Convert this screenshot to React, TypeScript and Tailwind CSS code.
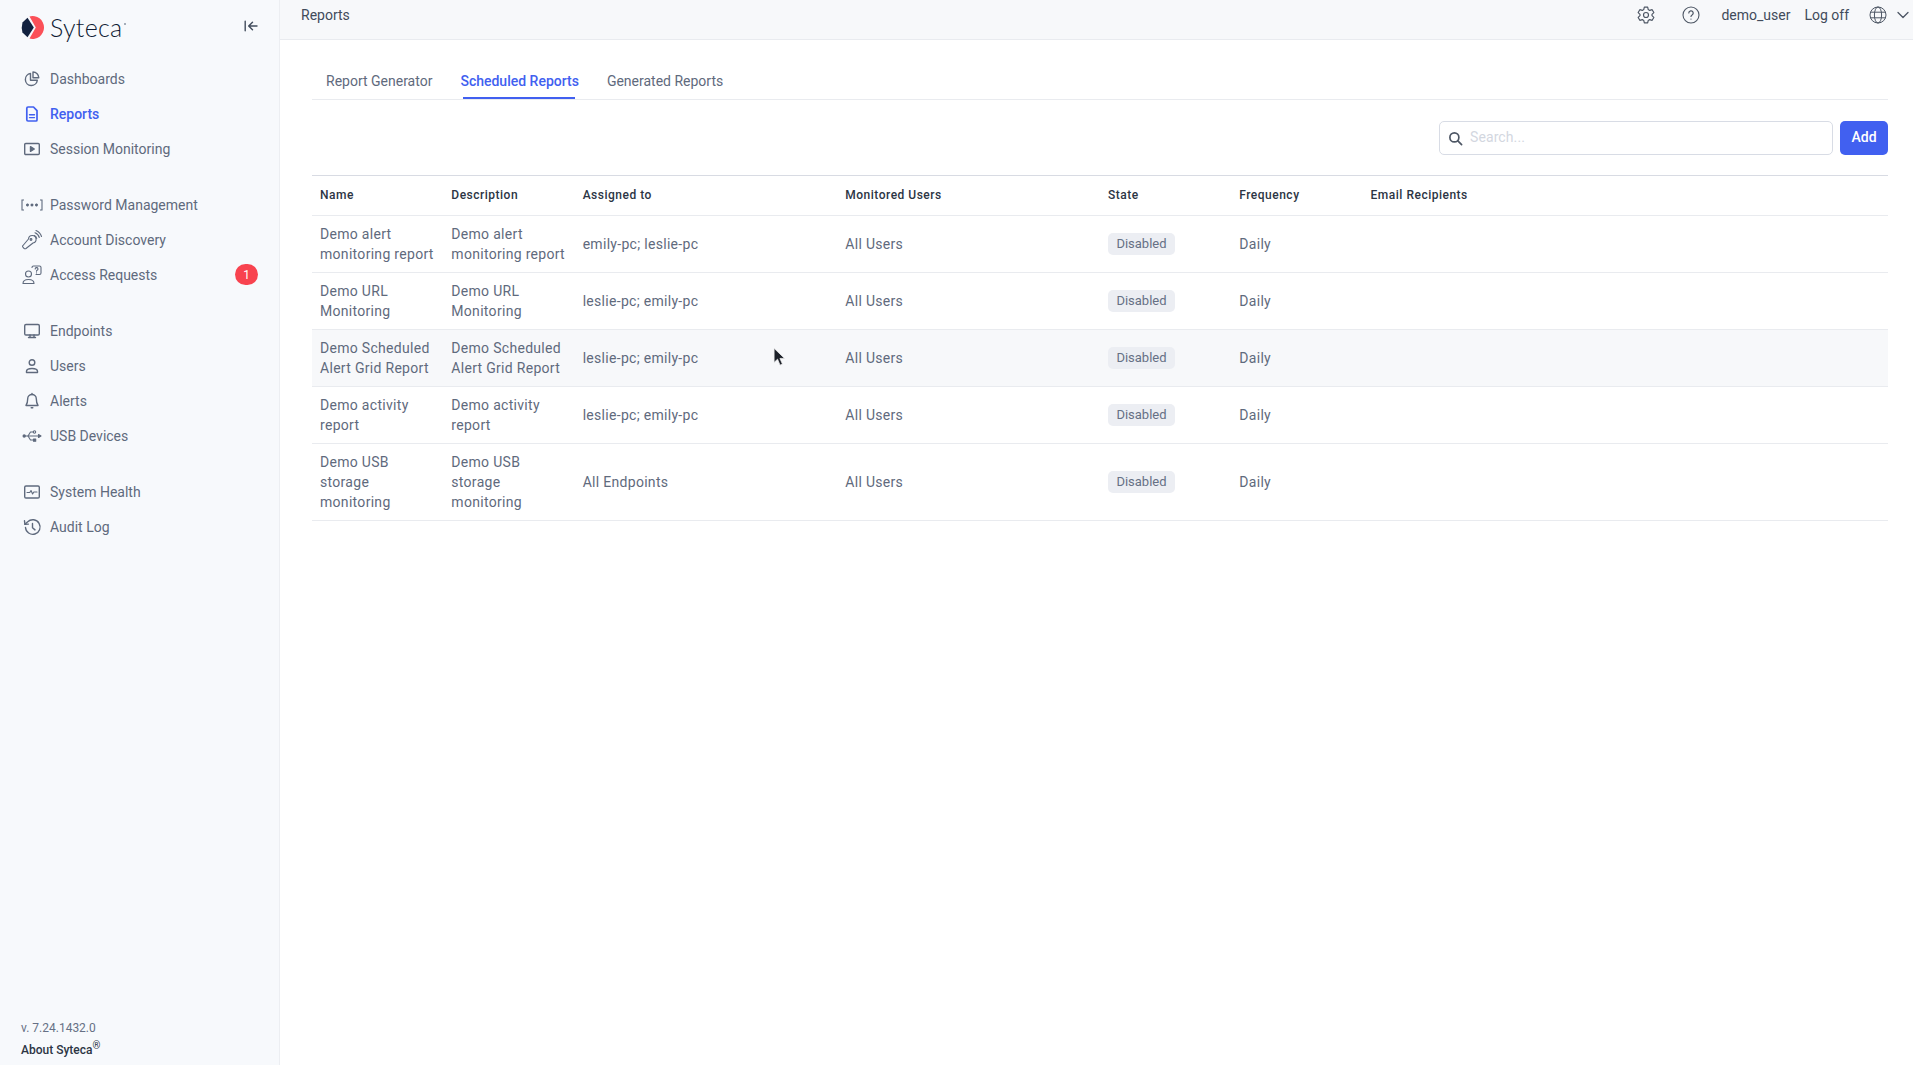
import React from 'react';

const Svg = ({ children, className }: { children: React.ReactNode; className?: string }) => (
  <svg viewBox="0 0 20 20" fill="none" stroke="currentColor" strokeWidth="1.4" strokeLinecap="round" strokeLinejoin="round" className={className}>
    {children}
  </svg>
);

const iconClass = 'w-5 h-5';

const DashboardsIcon = () => (
  <Svg className={iconClass}>
    <path d="M8.5 4.500a6 6 0 1 0 6.800 6.800H8.500z" />
    <path d="M11 3a5.800 5.800 0 0 1 5.800 5.800H11z" />
  </Svg>
);
const ReportsIcon = () => (
  <Svg className={iconClass}>
    <path d="M6 3h5.500l3.500 3.700v9.300a1 1 0 0 1-1 1H6a1.200 1.200 0 0 1-1.200-1.200V4.200A1.200 1.200 0 0 1 6 3z" strokeWidth="1.700" />
    <path d="M7.500 10.800h5M7.500 13.600h5" strokeWidth="1.400" />
  </Svg>
);
const SessionIcon = () => (
  <Svg className={iconClass}>
    <rect x="2.700" y="4.500" width="14.600" height="11" rx="1.100" />
    <path d="M8.500 7.700l3.800 2.300-3.800 2.300z" fill="currentColor" />
  </Svg>
);
const PasswordIcon = () => (
  <svg viewBox="0 0 22 12" className="w-[22px] h-3" fill="none" stroke="currentColor" strokeWidth="1.100">
    <path d="M3 1H1v10h2M19 1h2v10h-2" />
    <path d="M6.500 4.500v3M5.200 5.300l2.600 1.400M7.800 5.300L5.200 6.700M11 4.500v3M9.700 5.300l2.600 1.400M12.300 5.300L9.700 6.700M15.500 4.500v3M14.200 5.300l2.600 1.400M16.800 5.300l-2.600 1.400" />
  </svg>
);
const DiscoveryIcon = () => (
  <svg viewBox="0 0 22 22" className="w-[22px] h-[22px]" fill="none" stroke="currentColor" strokeWidth="1.100" strokeLinecap="round" strokeLinejoin="round">
    <path d="M2 16.500l5.500-6.500a3.800 3.800 0 1 1 4.500 4L5.300 19.300a1.600 1.600 0 0 1-2.300 0l-.8-.8a1.200 1.200 0 0 1-.2-2z" />
    <circle cx="10" cy="10.500" r=".9" />
    <path d="M13.300 6.500a4 4 0 0 1 2.400 3M14 3.800a7 7 0 0 1 4.300 4.700M15 1.500a9.500 9.500 0 0 1 5.500 6" />
  </svg>
);
const AccessIcon = () => (
  <svg viewBox="0 0 22 22" className="w-[22px] h-[22px]" fill="none" stroke="currentColor" strokeWidth="1.100" strokeLinecap="round" strokeLinejoin="round">
    <circle cx="7.500" cy="10" r="3" />
    <path d="M2 19.500c0-2.600 2-4 5.500-4s5.500 1.400 5.500 4z" />
    <path d="M11 3.500a1.500 1.500 0 0 1 1.500-1.500h6A1.500 1.500 0 0 1 20 3.500V9a1.500 1.500 0 0 1-1.500 1.500H15" />
    <path d="M14.200 5a1.400 1.400 0 1 1 1.900 1.300c-.4.2-.6.4-.6.9M15.500 8.800v.1" />
  </svg>
);
const EndpointsIcon = () => (
  <Svg className={iconClass}>
    <rect x="2.700" y="3.500" width="14.600" height="10.500" rx="1.300" />
    <path d="M8 14v2M12 14v2M6.500 16.500h7" />
  </Svg>
);
const UsersIcon = () => (
  <Svg className={iconClass}>
    <circle cx="10" cy="6.500" r="2.800" />
    <path d="M4.500 16.500v-1.200c0-1.800 2.200-2.800 5.500-2.800s5.500 1 5.500 2.800v1.200z" />
  </Svg>
);
const AlertsIcon = () => (
  <Svg className={iconClass}>
    <path d="M10 3.500a4.300 4.300 0 0 0-4.300 4.300c0 3.500-.7 5.200-1.700 6.700h12c-1-1.500-1.700-3.200-1.700-6.700A4.300 4.300 0 0 0 10 3.500z" />
    <path d="M9.200 16.800h1.600M10 2.500v1" />
  </Svg>
);
const UsbIcon = () => (
  <svg viewBox="0 0 20 14" className="w-5 h-[14px]" fill="none" stroke="currentColor" strokeWidth="1.100" strokeLinecap="round" strokeLinejoin="round">
    <circle cx="2.200" cy="7" r="1.700" fill="currentColor" stroke="none" />
    <path d="M2.500 7h15" />
    <path d="M6 7l2.500-4h3M6 7l2.500 4h3" />
    <circle cx="12.500" cy="3" r="1.200" />
    <rect x="11.500" y="10" width="2.200" height="2.200" fill="currentColor" />
    <path d="M16.500 5.500L19 7l-2.500 1.500z" fill="currentColor" />
  </svg>
);
const HealthIcon = () => (
  <Svg className={iconClass}>
    <rect x="2.700" y="4" width="14.600" height="12" rx="1.300" />
    <path d="M5 10.500h2.800l1.200-2 1.600 3.500 1.200-2h3.200" strokeWidth="1.100" />
  </Svg>
);
const AuditIcon = () => (
  <Svg className={iconClass}>
    <path d="M3.500 10.500a7.300 7.300 0 1 0 2.200-5.700L3 7.300" />
    <path d="M2.500 3.800l.4 3.600 3.500-.3" />
    <path d="M10.500 6.500v4.200l2.500 2.200" />
  </Svg>
);

const CollapseIcon = () => (
  <svg viewBox="0 0 14 12" className="w-[14px] h-3" fill="none" stroke="currentColor" strokeWidth="1.400" strokeLinecap="round" strokeLinejoin="round">
    <path d="M1.200 1.200v9.600M13 6H5M8.500 2.200L4.700 6l3.800 3.800" />
  </svg>
);

const Logo = () => (
  <div className="flex items-center">
    <svg viewBox="0 0 23 23" className="w-[23px] h-[23px]">
      <path d="M8.500 .4A11.500 11.500 0 1 1 8.500 22.600L14.800 11.500z" fill="#fb5058" />
      <path d="M6.500 1.800L12.800 11.500 6.500 21.200 1.500 16.500Q0 11.500 1.500 6.500z" fill="#12213f" />
    </svg>
    <span className="ml-[6px] font-['Lato',sans-serif] text-[25px] leading-none font-light tracking-[0.3px] text-[#0e1a33]">Syteca</span>
    <span className="ml-[1px] mb-[8px] w-[2px] h-[2px] bg-[#8a93a3] rounded-full" />
  </div>
);

const navGroups = [
  [
    { label: 'Dashboards', icon: <DashboardsIcon /> },
    { label: 'Reports', icon: <ReportsIcon />, active: true },
    { label: 'Session Monitoring', icon: <SessionIcon /> },
  ],
  [
    { label: 'Password Management', icon: <PasswordIcon /> },
    { label: 'Account Discovery', icon: <DiscoveryIcon /> },
    { label: 'Access Requests', icon: <AccessIcon />, badge: 1 },
  ],
  [
    { label: 'Endpoints', icon: <EndpointsIcon /> },
    { label: 'Users', icon: <UsersIcon /> },
    { label: 'Alerts', icon: <AlertsIcon /> },
    { label: 'USB Devices', icon: <UsbIcon /> },
  ],
  [
    { label: 'System Health', icon: <HealthIcon /> },
    { label: 'Audit Log', icon: <AuditIcon /> },
  ],
];

const reports = [
  { name: 'Demo alert monitoring report', assigned: 'emily-pc; leslie-pc' },
  { name: 'Demo URL Monitoring', assigned: 'leslie-pc; emily-pc' },
  { name: 'Demo Scheduled Alert Grid Report', assigned: 'leslie-pc; emily-pc', hovered: true },
  { name: 'Demo activity report', assigned: 'leslie-pc; emily-pc' },
  { name: 'Demo USB storage monitoring', assigned: 'All Endpoints' },
];

const columns = ['Name', 'Description', 'Assigned to', 'Monitored Users', 'State', 'Frequency', 'Email Recipients'];

const Sidebar = () => (
  <aside className="w-[280px] shrink-0 h-full flex flex-col bg-[#f7f9fc] border-r border-[#eceef2]">
    <div className="h-[52px] pl-[21px] pr-[22px] pt-[15px] flex items-start justify-between">
      <Logo />
      <div className="text-[#424c5c] mt-[5px] mr-[-1px]">
        <CollapseIcon />
      </div>
    </div>
    <nav className="mt-[9px] flex flex-col gap-[21px]">
      {navGroups.map((group, i) => (
        <div key={i} className="flex flex-col">
          {group.map((item) => (
            <div
              key={item.label}
              className={`h-[35px] flex items-center pr-[21px] ${item.active ? 'text-[#4160f0] font-medium' : 'text-[#5f6a7d]'}`}
            >
              <div className="w-[50px] pl-[20px] pr-[6px] flex justify-center shrink-0">{item.icon}</div>
              <span className="text-[14px] leading-5 flex-1">{item.label}</span>
              {item.badge && (
                <span className="w-[23px] h-[21px] rounded-full bg-[#f8434f] text-white text-[12px] flex items-center justify-center">
                  {item.badge}
                </span>
              )}
            </div>
          ))}
        </div>
      ))}
    </nav>
    <div className="mt-auto pl-[21px] pb-[6px] text-[12px] leading-[18px]">
      <div className="text-[#667085] mb-[4px]">v. 7.24.1432.0</div>
      <div className="text-[#2c3544] font-medium">
        About Syteca<sup className="text-[10px] font-normal leading-none">®</sup>
      </div>
    </div>
  </aside>
);

const Header = () => (
  <header className="h-10 shrink-0 bg-[#f7f8fa] border-b border-[#e9ebef] flex pl-[21px] pr-[4px] pt-[5px] text-[14px] leading-5 text-[#414b5a]">
    <span>Reports</span>
    <div className="ml-auto flex h-5">
      <svg viewBox="0 0 24 24" className="w-5 h-5 text-[#4d5664]" fill="none" stroke="currentColor" strokeWidth="1.400" strokeLinejoin="round">
        <path d="M10 2.500h4l.7 3 1.700 1 3-.9 2 3.500-2.200 2.100v1.600l2.200 2.100-2 3.500-3-.9-1.700 1-.7 3h-4l-.7-3-1.700-1-3 .9-2-3.500 2.200-2.100v-1.600L2.600 9.100l2-3.500 3 .9 1.700-1z" />
        <circle cx="12" cy="12" r="3" />
      </svg>
      <svg viewBox="0 0 18 18" className="ml-[26px] w-[18px] h-[18px] mt-[1px] text-[#4d5664]" fill="none" stroke="currentColor" strokeWidth="1.100" strokeLinecap="round">
        <circle cx="9" cy="9" r="8" />
        <path d="M6.800 7a2.200 2.200 0 1 1 3.300 1.900c-.7.4-1.100.8-1.100 1.600M9 13v.1" strokeWidth="1.200" />
      </svg>
      <span className="ml-[21px]">demo_user</span>
      <span className="ml-[14px]">Log off</span>
      <svg viewBox="0 0 18 18" className="ml-[20px] w-[18px] h-[18px] mt-[1px] text-[#4d5664]" fill="none" stroke="currentColor" strokeWidth="1">
        <circle cx="9" cy="9" r="8" />
        <ellipse cx="9" cy="9" rx="3.600" ry="8" />
        <path d="M1.500 6.200h15M1.500 11.800h15" />
      </svg>
      <svg viewBox="0 0 12 8" className="ml-[10px] w-3 h-2 mt-[6px] text-[#4d5664]" fill="none" stroke="currentColor" strokeWidth="1.300" strokeLinecap="round" strokeLinejoin="round">
        <path d="M1 1.500l5 5 5-5" />
      </svg>
    </div>
  </header>
);

const Tabs = () => (
  <div className="flex h-[60px] pt-[31px] border-b border-[#e9ebef] text-[14px] leading-5 text-[#5f6a7d]">
    <div className="ml-[14px]">Report Generator</div>
    <div className="relative ml-[28px] text-[#4160f0] font-medium">
      Scheduled Reports
      <span className="absolute left-[3px] right-[4px] top-[26px] h-[2px] bg-[#4160f0]" />
    </div>
    <div className="ml-[28px]">Generated Reports</div>
  </div>
);

const Toolbar = () => (
  <div className="h-[75px] flex justify-end items-start pt-[21px] gap-[7px]">
    <div className="w-[394px] h-[34px] flex items-center rounded-[5px] border border-[#d8dce5] bg-white pl-[8px]">
      <svg viewBox="0 0 16 16" className="w-[15px] h-[15px] text-[#4d5664]" fill="none" stroke="currentColor" strokeWidth="1.800" strokeLinecap="round">
        <circle cx="6.800" cy="6.800" r="4.800" />
        <path d="M10.500 10.500l4 4" />
      </svg>
      <span className="ml-[7px] pb-[2px] text-[14px] tracking-[0.1px] text-[#d3d7df]">Search...</span>
    </div>
    <button className="w-12 h-[34px] pb-[2px] rounded-[5px] bg-[#4160f0] text-white text-[14px] font-medium">Add</button>
  </div>
);

const ReportsTable = () => (
  <table className="w-full table-fixed border-collapse text-[14px] leading-5 tracking-[0.3px] text-[#5f6a7d]">
    <colgroup>
      <col className="w-[8.333%]" />
      <col className="w-[8.333%]" />
      <col className="w-[16.667%]" />
      <col className="w-[16.667%]" />
      <col className="w-[8.333%]" />
      <col className="w-[8.333%]" />
      <col />
    </colgroup>
    <thead>
      <tr className="h-[40px] border-t border-t-[#d8dbe3] border-b border-b-[#e9ebef]">
        {columns.map((c) => (
          <th key={c} className="px-2 pb-[2px] text-left text-[12px] font-medium tracking-[0.5px] text-[#2c3544]">
            {c}
          </th>
        ))}
      </tr>
    </thead>
    <tbody>
      {reports.map((r) => (
        <tr key={r.name} className={`border-b border-[#e9ebef] ${r.hovered ? 'bg-[#f7f8fa]' : ''}`}>
          <td className="px-2 py-2 align-middle">{r.name}</td>
          <td className="px-2 py-2 align-middle">{r.name}</td>
          <td className="px-2 py-2 align-middle">{r.assigned}</td>
          <td className="px-2 py-2 align-middle">All Users</td>
          <td className="px-2 py-2 align-middle">
            <span className="inline-flex h-[22px] w-[67px] items-center justify-center rounded-[5px] bg-[#eceef3] text-[13px] tracking-normal text-[#667085] align-middle">Disabled</span>
          </td>
          <td className="px-2 py-2 align-middle">Daily</td>
          <td className="px-2 py-2" />
        </tr>
      ))}
    </tbody>
  </table>
);

const Cursor = () => (
  <svg viewBox="0 0 12 18" className="absolute left-[773px] top-[347px] w-[13px] h-5">
    <path d="M1 1v13l3.200-3 2.300 5.500 2.200-1-2.300-5.200h4.300z" fill="#1d2129" stroke="#f2f2f2" strokeWidth=".7" />
  </svg>
);

export default function App() {
  return (
    <div className="relative h-[1065px] w-full flex overflow-hidden bg-white font-['Roboto',sans-serif]">
      <Sidebar />
      <main className="flex-1 min-w-0 flex flex-col">
        <Header />
        <div className="pl-[32px] pr-[25px]">
          <Tabs />
          <Toolbar />
          <ReportsTable />
        </div>
      </main>
      <Cursor />
    </div>
  );
}
